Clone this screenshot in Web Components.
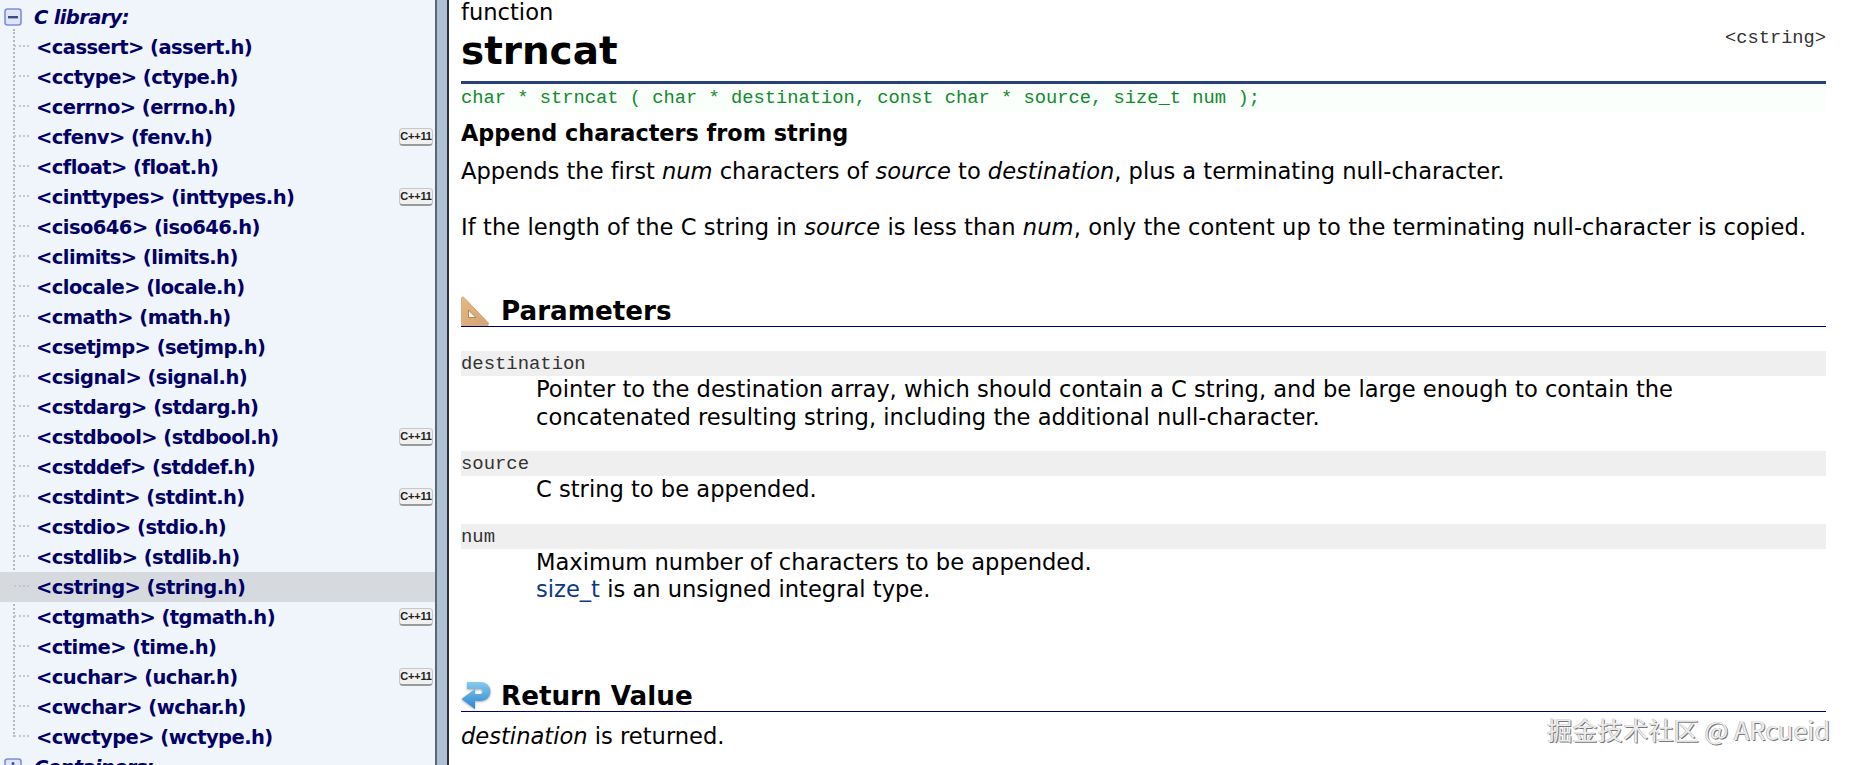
<!DOCTYPE html>
<html lang="en"><head><meta charset="utf-8"><title>strncat</title>
<style>
html,body{margin:0;height:765px;overflow:hidden;background:#fff}
body{font-family:"DejaVu Sans",sans-serif}
</style></head>
<body>
<cpp-page>
<nav-tree slot="nav"></nav-tree>
<doc-main slot="main">
  <doc-head kind="function" name="strncat" header="&lt;cstring&gt;"></doc-head>
  <doc-proto>char * strncat ( char * destination, const char * source, size_t num );</doc-proto>
  <h-summary>Append characters from string</h-summary>
  <doc-p ls="-.02">Appends the first <i>num</i> characters of <i>source</i> to <i>destination</i>, plus a terminating null-character.</doc-p>
  <doc-p gap="28" ls=".06">If the length of the C string in <i>source</i> is less than <i>num</i>, only the content up to the terminating null-character is copied.</doc-p>
  <sec-head icon="ruler" top="49">Parameters</sec-head>
  <param-item name="destination" top="24">Pointer to the destination array, which should contain a C string, and be large enough to contain the<br>concatenated resulting string, including the additional null-character.</param-item>
  <param-item name="source" top="20">C string to be appended.</param-item>
  <param-item name="num" top="20">Maximum number of characters to be appended.<br><a>size_t</a> is an unsigned integral type.</param-item>
  <sec-head icon="ret" top="71">Return Value</sec-head>
  <doc-p gap="10"><i>destination</i> is returned.</doc-p>
</doc-main>
<wm-mark slot="over">掘金技术社区 @ ARcueid</wm-mark>
</cpp-page>
<script>
function def(name, css, html, init){
  customElements.define(name, class extends HTMLElement{
    connectedCallback(){
      if(this.shadowRoot) return;
      const r=this.attachShadow({mode:'open'});
      r.innerHTML='<style>'+css+'</style>'+(typeof html==='function'?html(this):html);
      if(init) init(this,r);
    }
  });
}
def('cpp-page',
 ':host{display:flex;position:relative;width:1852px;height:765px;overflow:hidden;background:#fff}'+
 '.side{flex:none;width:435px;height:765px;overflow:hidden}'+
 '.bar{flex:none;width:10px;background:#adc0d4;border-left:2px solid #5c6670;border-right:2px solid #2b2f36}'+
 '.main{flex:1;min-width:0}',
 '<div class="side"><slot name="nav"></slot></div><div class="bar"></div><div class="main"><slot name="main"></slot></div><slot name="over"></slot>');

const rows=[['cassert','assert'],['cctype','ctype'],['cerrno','errno'],['cfenv','fenv',1],['cfloat','float'],['cinttypes','inttypes',1],['ciso646','iso646'],['climits','limits'],['clocale','locale'],['cmath','math'],['csetjmp','setjmp'],['csignal','signal'],['cstdarg','stdarg'],['cstdbool','stdbool',1],['cstddef','stddef'],['cstdint','stdint',1],['cstdio','stdio'],['cstdlib','stdlib'],['cstring','string',0,1],['ctgmath','tgmath',1],['ctime','time'],['cuchar','uchar',1],['cwchar','wchar'],['cwctype','wctype']];
const box=(minus)=>`<svg width="18" height="18" viewBox="0 0 18 18" style="flex:none;margin-left:4px"><rect x="1" y="1" width="16" height="16" rx="2.5" fill="#dfe4f6" stroke="#7d8fd6" stroke-width="1.6"/><rect x="4" y="8" width="10" height="2.4" fill="#3b4a8c"/>${minus?'':'<rect x="7.8" y="4.2" width="2.4" height="10" fill="#3b4a8c"/>'}</svg>`;
def('nav-tree',
 ':host{display:block;background:#f0f4fb;height:790px;padding-top:2px;font:bold 19.5px/30px "DejaVu Sans",sans-serif;color:#000066;position:relative}'+
 '.vline{position:absolute;left:12.5px;top:29px;height:708px;border-left:2px dotted #b4b8c0}'+
 '.group{display:flex;align-items:center;height:30px}'+
 '.group i{margin-left:12px;letter-spacing:-.65px;position:relative;top:1px}'+
 '.row{display:flex;align-items:center;height:30px;position:relative}'+
 '.row.on{background:#d6dadf}'+
 '.dots{flex:none;width:15px;margin-left:14px;height:0;border-top:2px dotted #c4c8ce;margin-right:7px;margin-top:-3px}'+
 '.t{letter-spacing:-.55px;white-space:pre;position:relative;top:1px}'+
 '.badge{position:absolute;left:399px;top:6px;width:34px;height:18px;box-sizing:border-box;background:#f0f0f0;border:1px solid #c8c8c8;border-bottom:2px solid #9a9a9a;border-radius:4px;font:bold 11px/14px "Liberation Sans",sans-serif;letter-spacing:-.2px;color:#222;text-align:center}',
 ()=>`<div class="vline"></div><div class="group">${box(1)}<i>C library:</i></div>`+
   rows.map(r=>`<div class="row${r[3]?' on':''}"><span class="dots"></span><span class="t">&lt;${r[0]}&gt; (${r[1]}.h)</span>${r[2]?'<span class="badge">C++11</span>':''}</div>`).join('')+
   `<div class="group">${box(0)}<i>Containers:</i></div>`);

def('doc-main',':host{display:block;padding:0 26px 0 12px;font:22.6px/27.5px "DejaVu Sans",sans-serif;color:#000}','<slot></slot>');
def('doc-head',
 ':host{display:block;position:relative;height:81px;border-bottom:3px solid #26407a}'+
 '.k{font-size:22.6px;line-height:24px;height:24px}'+
 '.n{font-size:38.9px;font-weight:bold;line-height:50px;margin-top:2px}'+
 '.h{position:absolute;right:0;top:26px;font:18.7px/24px "Liberation Mono","Noto Sans CJK SC",monospace;color:#333}',
 h=>{const e=s=>s.replace(/</g,'&lt;');return `<div class="k">${h.getAttribute('kind')}</div><div class="n">${h.getAttribute('name')}</div><div class="h">${e(h.getAttribute('header'))}</div>`});
def('doc-proto',':host{display:block;background:#fbfffb;height:28px;font:18.75px/28px "Liberation Mono",monospace;color:#118a2e;white-space:pre}','<slot></slot>');
def('h-summary',':host{display:block;font-weight:bold;font-size:22.35px;line-height:28px;margin-top:7px}','<slot></slot>');
def('doc-p',':host{display:block;font-size:22.6px;line-height:28px;margin-top:var(--g,10px);letter-spacing:var(--ls,0);white-space:nowrap}','<slot></slot>',
 h=>{if(h.getAttribute('gap'))h.style.setProperty('--g',h.getAttribute('gap')+'px');if(h.getAttribute('ls'))h.style.setProperty('--ls',h.getAttribute('ls')+'px')});
const icons={
 ruler:'<svg width="30" height="30" viewBox="0 0 30 30"><defs><linearGradient id="t" x1="0" y1="0" x2="1" y2="1"><stop offset="0" stop-color="#e6b883"/><stop offset="1" stop-color="#d3a372"/></linearGradient></defs><path d="M0.5 2 Q1.5 0 3 1.5 L27.5 27 L27 29.5 L0.5 29.5Z" fill="url(#t)" stroke="#c9a47c" stroke-width=".8"/><path d="M7.5 14 L15 21.5 L7.5 21.5Z" fill="#f8f3e9" stroke="#b08656"/></svg>',
 ret:'<svg width="30" height="30" viewBox="0 0 30 30" style="filter:drop-shadow(0 1px 1px #aaa)"><defs><linearGradient id="g" x1="0" y1="0" x2="0" y2="1"><stop offset="0" stop-color="#86c9ee"/><stop offset="1" stop-color="#2a86cf"/></linearGradient></defs><path d="M6 1 H20 A9.5 9.5 0 0 1 20 20 H14 V28 L0.5 18 L14 8 V13 H20 A2.8 2.8 0 0 0 20 8 H6Z" fill="url(#g)"/></svg>'};
def('sec-head',
 ':host{display:block;border-bottom:1px solid #000066;font-weight:bold;font-size:26.2px;line-height:34px;height:36px;box-sizing:content-box;margin-top:var(--t);white-space:nowrap}'+
 '.w{display:flex;align-items:flex-end;height:36px}svg{flex:none;margin-right:10px;width:30px}span{line-height:30px}',
 h=>`<div class="w">${icons[h.getAttribute('icon')]}<span><slot></slot></span></div>`,
 h=>h.style.setProperty('--t',h.getAttribute('top')+'px'));
def('param-item',
 ':host{display:block;margin-top:var(--t)}'+
 '.n{background:#efefef;height:25px;font:18.9px/27px "Liberation Mono",monospace;color:#333}'+
 '.d{margin-left:75px;font-size:22.6px;line-height:27.5px}'+
 '::slotted(a){color:#0b3a82}',
 h=>`<div class="n">${h.getAttribute('name')}</div><div class="d"><slot></slot></div>`,
 h=>h.style.setProperty('--t',h.getAttribute('top')+'px'));
def('wm-mark',
 ':host{position:absolute;left:1547px;top:714px;font:25.3px/30px "Noto Sans CJK SC","Noto Sans",sans-serif;color:#ececec;white-space:nowrap;text-shadow:1px 1px 0 #777,-0.5px -0.5px 0 #aaa}','<slot></slot>');
</script>
</body></html>
